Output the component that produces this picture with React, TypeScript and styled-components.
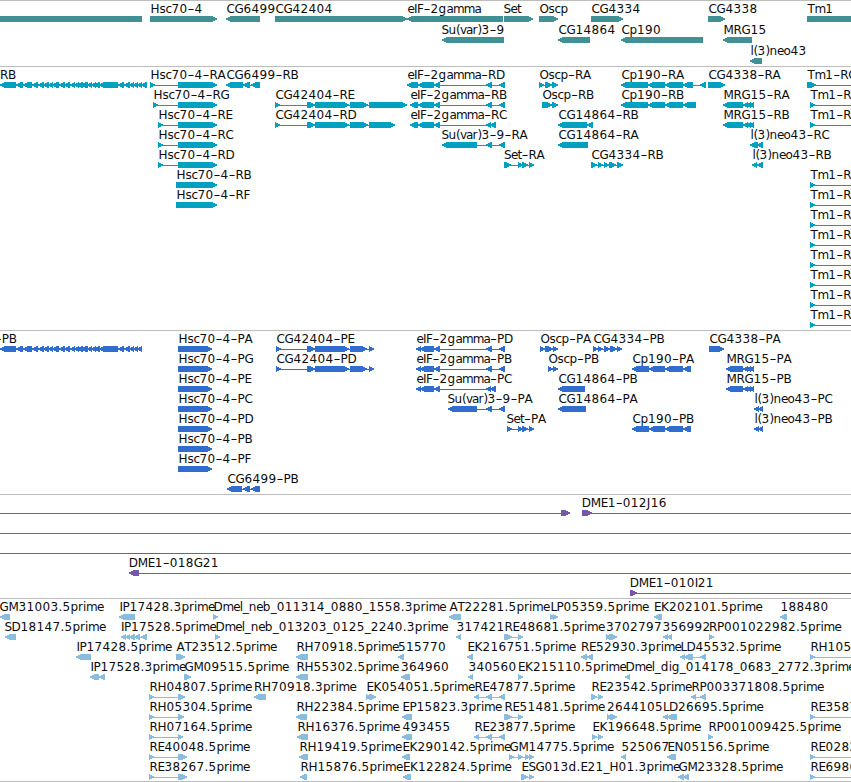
import React from "react";
import styled, { createGlobalStyle } from "styled-components";

const GlobalStyle = createGlobalStyle`
  body { margin: 0; background: #fff; overflow: hidden; }
`;

const Browser = styled.main`
  display: flex;
  flex-direction: column;
  width: 851px;
  height: 782px;
  overflow: hidden;
  background: #fff;
`;

const TrackPanel = styled.section<{ $height: number }>`
  box-sizing: border-box;
  height: ${(p) => p.$height}px;
  flex: none;
  border-top: 1px solid #bdbdbd;
  overflow: hidden;
`;

const Lane = styled.svg<{ $height: number; $color: string }>`
  display: block;
  width: 851px;
  height: ${(p) => p.$height}px;
  overflow: visible;
  fill: ${(p) => p.$color};
`;

const Label = styled.text`
  fill: #0c0c0c;
  font-family: "DejaVu Sans", sans-serif;
  font-size: 12px;
  white-space: pre;
`;

const Shape = styled.g`
  shape-rendering: crispEdges;
`;

type Exon = [number, number];
type Feature = { label: string; x: number; exons: Exon[]; dir: 1 | -1; span?: Exon };
type TrackData = { height: number; pitch: number; color: string; rows: Feature[][] };

// Advance widths, in pixels, of the label characters.
const ADVANCE: Record<string, number> = {
  A: 8, B: 7, C: 8, D: 9, E: 7, F: 6.5, G: 9, H: 9, I: 3, J: 4, K: 8, L: 6, M: 10, N: 9, O: 9,
  P: 7, R: 8, S: 7, T: 7, a: 6.5, b: 8, c: 6, d: 8, e: 6.5, g: 8, i: 3, l: 3, m: 10.8, n: 7.5, o: 7,
  p: 7.7, r: 5, s: 6, t: 4, u: 7.5, v: 6, "(": 4, ")": 4, "-": 7, ".": 4, _: 6,
};

const f = (label: string, exons: Exon[], dir: 1 | -1 = 1, x = exons[0][0], span?: Exon): Feature => ({
  label, x, exons, dir, span,
});

function FeatureLabel({ text, x }: { text: string; x: number }) {
  let pen = x + 0.4;
  const parts = text.split(/(-)/).filter(Boolean);
  return (
    <Label y={12}>
      {parts.map((part, n) => {
        const xs = [...part].map((ch) => {
          const at = pen;
          pen += ADVANCE[ch] ?? 8;
          return at;
        });
        return part === "-" ? (
          <tspan key={n} x={xs[0]} textLength={7} lengthAdjust="spacingAndGlyphs">-</tspan>
        ) : (
          <tspan key={n} x={xs.join(" ")}>{part}</tspan>
        );
      })}
    </Label>
  );
}

function exonPath([a, b]: Exon, dir: 1 | -1) {
  const tip = Math.min(5, b - a);
  return dir === 1
    ? `M${a} 15H${b - tip}L${b} 17.2V18.8L${b - tip} 21H${a}Z`
    : `M${b} 15H${a + tip}L${a} 17.2V18.8L${a + tip} 21H${b}Z`;
}

function Glyph({ feature }: { feature: Feature }) {
  const { exons, dir, span } = feature;
  const first = span ? span[0] : exons[0][0];
  const last = span ? span[1] : exons[exons.length - 1][1];
  return (
    <Shape>
      {(span || exons.length > 1) && <rect x={first + 1} y={18} width={last - first - 2} height={1} />}
      <path d={exons.map((e) => exonPath(e, dir)).join("")} />
    </Shape>
  );
}

function Track({ height, pitch, color, rows }: TrackData) {
  return (
    <TrackPanel $height={height}>
      {rows.map((row, i) => (
        <Lane key={i} $height={pitch} $color={color}>
          {row.map((feature, n) => <Glyph key={n} feature={feature} />)}
          {row.map((feature, n) => feature.label && <FeatureLabel key={n} text={feature.label} x={feature.x} />)}
        </Lane>
      ))}
    </TrackPanel>
  );
}

const genes: Feature[][] = [
  [
    f("", [[-20, 142]], -1), f("Hsc70-4", [[150, 217]]), f("CG6499", [[226, 260]], -1),
    f("CG42404", [[275, 407]]), f("eIF-2gamma", [[407, 503]], -1), f("Set", [[504, 533]], 1, 503),
    f("Oscp", [[539, 558]]), f("CG4334", [[591, 623]]), f("CG4338", [[708, 725]]), f("Tm1", [[807, 870]]),
  ],
  [
    f("Su(var)3-9", [[442, 504]], -1, 441), f("CG14864", [[558, 590]], -1),
    f("Cp190", [[621, 703]], -1), f("MRG15", [[723, 752]], -1),
  ],
  [f("l(3)neo43", [[750, 762]], -1)],
];

const muscle: Exon[] = [
  [0, 16], [16, 23], [23, 32], [32, 38], [38, 44], [43, 49], [48, 53], [52, 59], [59, 65], [64, 70],
  [70, 75], [74, 79], [77, 83], [81, 88], [87, 92], [91, 96], [94, 100], [99, 118], [118, 124],
  [124, 130], [129, 134], [133, 138],
];
const cp: Exon[] = [[621, 648], [648, 665], [665, 683]];
const mrg = (start: number): Exon[] => [[start, 743], [743, 748], [746, 751], [749, 754]];
const gammaHead = (start: number): Exon[] => [[start, 418], [418, 434], [434, 440]];
const cgHead = (start: number): Exon[] => [[start, start + 5], [307, 315], [315, 349]];
const tm = () => f("Tm1-RB", [[810, 815]], 1, 810, [810, 870]);
const varTail: Exon[] = [[486, 492], [499, 505]];
const gammaC: Exon[] = [[486, 491], [490, 496]];

const transcripts: Feature[][] = [
  [
    f("RB", [...muscle, [137, 142], [141, 147]], -1, -0.5), f("Hsc70-4-RA", [[150, 155], [178, 217]]),
    f("CG6499-RB", [[226, 243], [243, 250], [251, 260]], -1),
    f("eIF-2gamma-RD", [[407, 418], [418, 434], [434, 440], ...varTail], -1),
    f("Oscp-RA", [[539, 544], [545, 552], [552, 558]]), f("Cp190-RA", [...cp, [683, 693], [700, 706]], -1),
    f("CG4338-RA", [[708, 725]]), f("Tm1-RC", [[807, 816]], 1, 807, [807, 870]),
  ],
  [
    f("Hsc70-4-RG", [[153, 158], [178, 217]]), f("CG42404-RE", [...cgHead(275), [350, 368], [369, 407]]),
    f("eIF-2gamma-RB", [...gammaHead(410), ...varTail], -1), f("Oscp-RB", [[542, 552], [552, 558]]),
    f("Cp190-RB", [...cp, [683, 696]], -1), f("MRG15-RA", mrg(723), -1), tm(),
  ],
  [
    f("Hsc70-4-RE", [[158, 163], [178, 217]]), f("CG42404-RD", [...cgHead(275), [350, 368], [369, 395]]),
    f("eIF-2gamma-RC", [...gammaHead(410), ...gammaC], -1), f("CG14864-RB", [[558, 587], [587, 593]], -1),
    f("MRG15-RB", mrg(723), -1), tm(),
  ],
  [
    f("Hsc70-4-RC", [[158, 163], [178, 217]]), f("Su(var)3-9-RA", [[442, 477], ...varTail], -1, 441),
    f("CG14864-RA", [[558, 588]], -1), f("l(3)neo43-RC", [[750, 758], [757, 763]], -1),
  ],
  [
    f("Hsc70-4-RD", [[158, 163], [178, 217]]), f("Set-RA", [[504, 511], [518, 523], [522, 528], [529, 534]], 1, 503.5),
    f("CG4334-RB", [[591, 597], [598, 603], [604, 609], [609, 616], [617, 623]]),
    f("l(3)neo43-RB", [[752, 757], [757, 763]], -1),
  ],
  [f("Hsc70-4-RB", [[176, 217]]), tm()],
  [f("Hsc70-4-RF", [[176, 217]]), tm()],
  [tm()], [tm()], [tm()], [tm()], [tm()], [tm()],
];

const cpP: Exon[] = [[632, 649], [649, 665], [665, 683], [683, 691]];
const hsc = (suffix: string) => f(`Hsc70-4-P${suffix}`, [[178, 212]]);
const cgP = (suffix: string) => f(`CG42404-P${suffix}`, [...cgHead(276), [350, 367], [369, 374]]);
const gammaPHead: Exon[] = [[416, 421], [420, 434], [434, 440]];

const proteins: Feature[][] = [
  [
    f("-PB", [...muscle, [137, 142]], -1, -5.6), hsc("A"), cgP("E"),
    f("eIF-2gamma-PD", [...gammaPHead, ...varTail], -1), f("Oscp-PA", [[540, 545], [545, 553], [553, 558]]),
    f("CG4334-PB", [[593, 598], [598, 603], [604, 610], [610, 617], [617, 622]]), f("CG4338-PA", [[709, 724]]),
  ],
  [
    hsc("G"), cgP("D"), f("eIF-2gamma-PB", [...gammaPHead, ...varTail], -1),
    f("Oscp-PB", [[548, 553], [553, 558]]), f("Cp190-PA", cpP, -1), f("MRG15-PA", mrg(726), -1),
  ],
  [
    hsc("E"), f("eIF-2gamma-PC", [...gammaPHead, ...gammaC], -1), f("CG14864-PB", [[558, 585]], -1),
    f("MRG15-PB", mrg(726), -1),
  ],
  [
    hsc("C"), f("Su(var)3-9-PA", [[448, 477], ...varTail], -1, 447), f("CG14864-PA", [[558, 586]], -1),
    f("l(3)neo43-PC", [[754, 759], [758, 763]], -1),
  ],
  [
    hsc("D"), f("Set-PA", [[507, 512], [518, 523], [522, 528], [529, 534]], 1, 506), f("Cp190-PB", cpP, -1),
    f("l(3)neo43-PB", [[754, 759], [758, 763]], -1),
  ],
  [hsc("B")],
  [hsc("F")],
  [f("CG6499-PB", [[227, 242], [243, 250], [251, 260]], -1)],
];

const clones: Feature[][] = [
  [f("", [[561, 570]], 1, 0, [-10, 566]), f("DME1-012J16", [[582, 592]], 1, 581.4, [582, 870])],
  [f("", [[-30, -20]], 1, 0, [-10, 870])],
  [f("", [[-30, -20]], 1, 0, [-10, 870])],
  [f("DME1-018G21", [[129, 139]], -1, 128.4, [129, 870])],
  [f("DME1-010I21", [[630, 637]], 1, 629.4, [630, 870])],
];

const right = (label: string) => f(label, [[810, 815]], 1, 810, [810, 870]);

const ests: Feature[][] = [
  [
    f("GM31003.5prime", [[0, 10]], -1, -1), f("IP17428.3prime", [[119, 135]], -1),
    f("Dmel_neb_011314_0880_1558.3prime", [[213, 218]], 1, 213), f("AT22281.5prime", [[449, 461]], -1),
    f("LP05359.5prime", [[550, 554], [553, 558]]), f("EK202101.5prime", [[654, 662]], -1, 653.5),
    f("188480", [[780, 787]], -1),
  ],
  [
    f("SD18147.5prime", [[5, 16]], -1, 4),
    f("IP17528.5prime", [[121, 126], [125, 130], [129, 135], [134, 140], [141, 147]], -1, 120.5),
    f("Dmel_neb_013203_0125_2240.3prime", [[215, 220]], 1, 215), f("317421", [[456, 461]], -1),
    f("RE48681.5prime", [[504, 512], [518, 523]], 1, 504), f("3702797", [[606, 611], [609, 617]], 1, 605.5),
    f("356992", [[663, 668], [667, 672]], -1, 662), f("RP001022982.5prime", [[709, 714]], 1, 708.5),
  ],
  [
    f("IP17428.5prime", [[76, 91]], -1), f("AT23512.5prime", [[176, 185]]),
    f("RH70918.5prime", [[296, 308]], -1), f("515770", [[398, 404]], -1, 397.5),
    f("EK216751.5prime", [[467, 473]], -1, 467), f("RE52930.3prime", [[581, 587], [587, 593]], -1, 580.7),
    f("LD45532.5prime", [[680, 685], [684, 693], [700, 706]], -1, 680), right("RH10564.5prime"),
  ],
  [
    f("IP17528.3prime", [[90, 99], [99, 105]], -1), f("GM09515.5prime", [[184, 191]]),
    f("RH55302.5prime", [[296, 308]], -1), f("364960", [[401, 410]], -1, 400.5),
    f("340560", [[468, 473]], -1), f("EK215110.5prime", [[518, 523]], 1, 517.5),
    f("Dmel_dig_014178_0683_2772.3prime", [[625, 630]], -1, 625),
  ],
  [
    f("RH04807.5prime", [[149, 154], [178, 185]], 1, 149), f("RH70918.3prime", [[254, 266]], -1, 253.5),
    f("EK054051.5prime", [[366, 371], [369, 376]], 1, 366), f("RE47877.5prime", [[474, 479], [486, 492], [499, 505]], -1),
    f("RE23542.5prime", [[591, 597], [598, 603]]), f("RP003371808.5prime", [[691, 696], [700, 706]], -1, 691),
  ],
  [
    f("RH05304.5prime", [[149, 154], [178, 184]], 1, 149), f("RH22384.5prime", [[296, 307]], -1),
    f("EP15823.3prime", [[402, 412]], -1, 402), f("RE51481.5prime", [[504, 512], [518, 523]]),
    f("2644105", [[607, 612], [610, 617]], 1, 606.5), f("LD26695.5prime", [[663, 668], [667, 677]], -1, 662.5),
    right("RE35876.5prime"),
  ],
  [
    f("RH07164.5prime", [[149, 154], [178, 183]], 1, 149), f("RH16376.5prime", [[297, 308]], -1),
    f("493455", [[402, 412]], -1), f("RE23877.5prime", [[474, 479], [486, 492], [499, 505]], -1),
    f("EK196648.5prime", [[592, 597], [598, 603]], 1, 592), f("RP001009425.5prime", [[708, 713]], 1, 708),
  ],
  [
    f("RE40048.5prime", [[149, 154], [178, 187]], 1, 149), f("RH19419.5prime", [[299, 308]], -1),
    f("EK290142.5prime", [[402, 410]], -1, 402), f("GM14775.5prime", [[509, 514], [518, 523], [525, 530], [529, 534]]),
    f("525067", [[621, 626]], -1), f("EN05156.5prime", [[667, 676]], -1, 667), right("RE02823.5prime"),
  ],
  [
    f("RE38267.5prime", [[149, 154], [178, 187]], 1, 149), f("RH15876.5prime", [[300, 307]], -1),
    f("EK122824.5prime", [[403, 411]], -1, 402.5), f("ESG013d.E21_H01.3prime", [[521, 528], [529, 534]], 1, 521),
    f("GM23328.5prime", [[678, 684], [683, 689]], -1), right("RE69864.5prime"),
  ],
];

const tracks: TrackData[] = [
  { height: 66, pitch: 21, color: "#409094", rows: genes },
  { height: 264, pitch: 20, color: "#00a0c1", rows: transcripts },
  { height: 164, pitch: 20, color: "#316dce", rows: proteins },
  { height: 104, pitch: 20, color: "#7558a8", rows: clones },
  { height: 183, pitch: 20, color: "#8abddd", rows: ests },
  { height: 1, pitch: 20, color: "#8abddd", rows: [] },
];

export default function App() {
  return (
    <>
      <GlobalStyle />
      <Browser>
        {tracks.map((track, i) => <Track key={i} {...track} />)}
      </Browser>
    </>
  );
}
